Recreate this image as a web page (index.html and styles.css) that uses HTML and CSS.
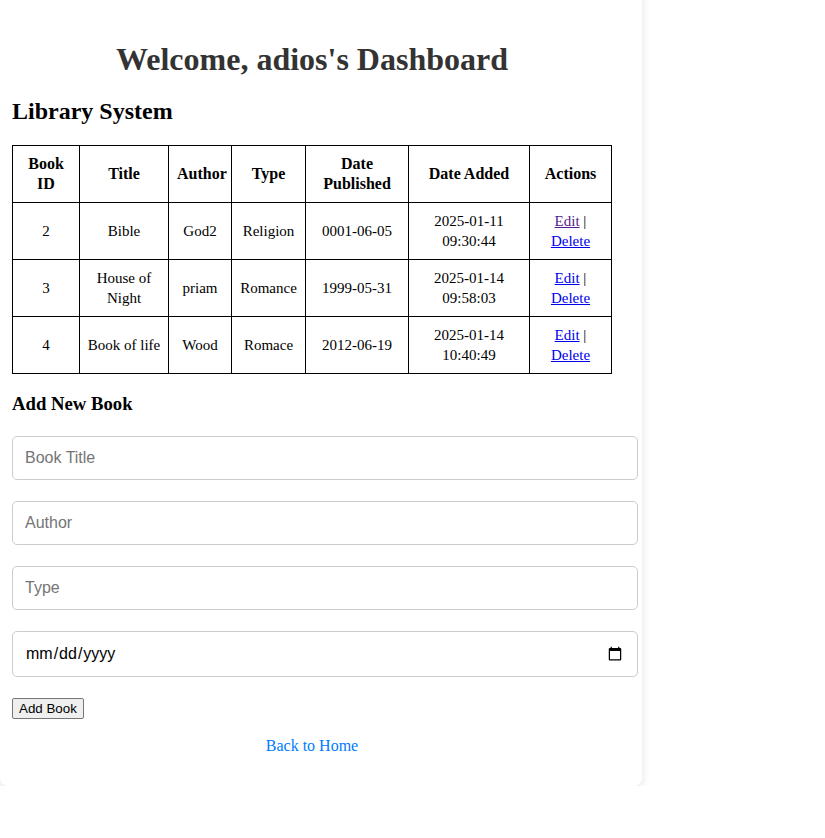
FILE: index.html
```html
<!DOCTYPE html>
<html>
<head>
<meta charset="utf-8">
<title>Dashboard</title>
<link rel="stylesheet" href="styles.css">
</head>
<body>
<div class="card">
  <h1 class="welcome">Welcome, adios's Dashboard</h1>
  <h2 class="section-title">Library System</h2>
  <table class="books">
    <thead>
      <tr>
        <th class="c-id">Book ID</th>
        <th class="c-title">Title</th>
        <th class="c-author">Author</th>
        <th class="c-type">Type</th>
        <th class="c-pub">Date Published</th>
        <th class="c-added">Date Added</th>
        <th class="c-actions">Actions</th>
      </tr>
    </thead>
    <tbody>
      <tr>
        <td>2</td><td>Bible</td><td>God2</td><td>Religion</td><td>0001-06-05</td><td>2025-01-11 09:30:44</td>
        <td><a href="#" class="visited">Edit</a> | <a href="#">Delete</a></td>
      </tr>
      <tr>
        <td>3</td><td>House of Night</td><td>priam</td><td>Romance</td><td>1999-05-31</td><td>2025-01-14 09:58:03</td>
        <td><a href="#">Edit</a> | <a href="#">Delete</a></td>
      </tr>
      <tr>
        <td>4</td><td>Book of life</td><td>Wood</td><td>Romace</td><td>2012-06-19</td><td>2025-01-14 10:40:49</td>
        <td><a href="#">Edit</a> | <a href="#">Delete</a></td>
      </tr>
    </tbody>
  </table>
  <h3 class="add-title">Add New Book</h3>
  <form class="add-form">
    <input class="field" type="text" placeholder="Book Title">
    <input class="field" type="text" placeholder="Author">
    <input class="field" type="text" placeholder="Type">
    <input class="field" type="date">
    <button class="add-btn" type="button">Add Book</button>
  </form>
  <p class="back"><a href="#" class="back-link">Back to Home</a></p>
</div>
</body>
</html>
```

FILE: styles.css
```css
html, body {
  margin: 0;
  padding: 0;
  background: #ffffff;
}
body {
  font-family: "Liberation Serif", "Times New Roman", serif;
  font-size: 16px;
  color: #000;
}
.card {
  width: 600px;
  margin-top: -10px;
  padding: 30px 30px 16px 12px;
  background: #fff;
  border-radius: 8px;
  box-shadow: 0 2px 10px rgba(0, 0, 0, 0.12);
}
.welcome {
  text-align: center;
  color: #333;
  font-size: 32px;
  margin: 21px 0 20px;
}
.section-title {
  font-size: 24px;
  margin: 20px 0 20px;
}
.books {
  width: 599px;
  border-collapse: collapse;
  table-layout: fixed;
}
.books th, .books td {
  border: 1px solid #000;
  text-align: center;
  line-height: 20px;
  box-sizing: border-box;
}
.books th {
  font-size: 16px;
  padding: 8px 8px;
}
.books td {
  font-size: 15px;
  padding: 8px 6px;
}
.c-id { width: 67px; }
.c-title { width: 89px; }
.c-author { width: 63px; }
.c-type { width: 74px; }
.c-pub { width: 103px; }
.c-added { width: 121px; }
.c-actions { width: 82px; }
.books a { color: #0000ee; }
.books a.visited { color: #551a8b; }
.add-title {
  font-size: 18.72px;
  margin: 19px 0 21px;
}
.add-form {
  display: flex;
  flex-direction: column;
  gap: 21px;
  margin: 0;
}
.field {
  width: 600px;
  padding: 12px;
  border: 1px solid #ccc;
  border-radius: 5px;
  font-family: "Liberation Sans", Arial, sans-serif;
  font-size: 16px;
  line-height: 18px;
  color: #000;
  background: #fff;
  margin: 0;
  outline: none;
}
.field::placeholder {
  color: #757575;
}
.add-btn {
  align-self: flex-start;
  font-family: "Liberation Sans", Arial, sans-serif;
  font-size: 13.33px;
  padding: 1px 6px;
  height: 21px;
  background: #efefef;
  border: 1px solid #767676;
  border-radius: 2px;
  color: #000;
}
.back {
  text-align: center;
  margin: 18px 0 15px;
}
.back-link {
  color: #007bff;
  text-decoration: none;
}
```
